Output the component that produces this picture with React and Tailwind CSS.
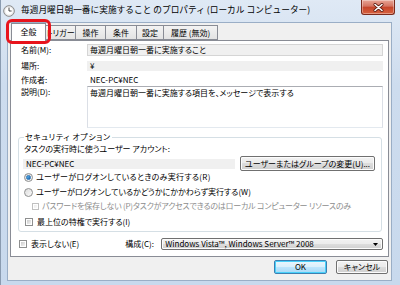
import React from "react";

const F = "font-['Noto_Sans_CJK_JP','Noto_Sans',sans-serif] [font-feature-settings:'palt']";

function Radio({ checked }) {
  return (
    <div className="w-[9px] h-[9px] rounded-full border border-[#8e8f8f] bg-gradient-to-br from-[#dcdcdc] to-[#fbfbfb] flex items-center justify-center shrink-0">
      {checked && (
        <div className="w-[5px] h-[5px] rounded-full bg-gradient-to-br from-[#5dc1f5] to-[#1d5da8] border border-[#2a72b5]" />
      )}
    </div>
  );
}

function Check({ disabled }) {
  return (
    <div
      className={
        "shrink-0 border bg-white p-[1px] " +
        (disabled ? "border-[#c0c0c0] w-[7px] h-[7px]" : "border-[#8e8f8f] w-[8px] h-[8px]")
      }
    >
      <div className={"w-full h-full bg-gradient-to-br " + (disabled ? "from-[#ececec] to-[#fafafa]" : "from-[#cbcbcb] to-[#f4f4f4]")} />
    </div>
  );
}

function Btn({ children, className = "", def }) {
  return (
    <div
      className={
        "rounded-[2px] border flex items-center justify-center text-[8px] leading-none text-black " +
        (def
          ? "border-[#3c7fb1] bg-[linear-gradient(#eaf6fd_0%,#d9f0fc_50%,#bee6fd_50%,#a7d9f5_100%)] shadow-[inset_0_0_0_1px_#48d1fa] "
          : "border-[#707070] bg-[linear-gradient(#f2f2f2_0%,#ebebeb_50%,#dddddd_50%,#cfcfcf_100%)] shadow-[inset_0_0_0_1px_#fcfcfc] ") +
        className
      }
    >
      {children}
    </div>
  );
}

export default function App() {
  return (
    <div className={"w-[400px] h-[285px] relative overflow-hidden flex flex-col bg-[linear-gradient(#dfe9f5,#cddcee_30%,#c8d9ed)] border-l border-[#8a9bb0] " + F}>
      {/* title bar */}
      <div className="h-[22px] shrink-0 flex items-start relative">
        <svg className="ml-[2px] mt-[5px]" width="12" height="12" viewBox="0 0 12 12">
          <circle cx="6" cy="6" r="5.3" fill="#f4f4f4" stroke="#7a7a7a" strokeWidth="0.9" />
          <circle cx="6" cy="6" r="4.2" fill="#fff" stroke="#c8c8c8" strokeWidth="0.5" />
          <path d="M6 2.6 V6 H8.6" stroke="#333" strokeWidth="0.9" fill="none" />
        </svg>
        <div className="ml-[6px] mt-[4px] text-[8.7px] leading-[12px] text-black whitespace-nowrap [font-feature-settings:normal]">
          毎週月曜日朝一番に実施すること のプロパティ (ローカル コンピューター)
        </div>
        <div className="absolute right-[5px] top-0 w-[34px] h-[15px] rounded-b-[3px] border border-t-0 border-[#7a2a1c] bg-[linear-gradient(#e8a596,#d47360_45%,#c5442a_50%,#d8623f)] flex items-center justify-center shadow-[inset_0_0_0_1px_rgba(255,255,255,0.35)]">
          <svg width="11" height="9" viewBox="0 0 11 9">
            <path d="M2 1.5 L9 7.5 M9 1.5 L2 7.5" stroke="#5a1a10" strokeWidth="3" strokeLinecap="round" />
            <path d="M2 1.5 L9 7.5 M9 1.5 L2 7.5" stroke="#fff" strokeWidth="1.6" strokeLinecap="round" />
          </svg>
        </div>
      </div>

      {/* client */}
      <div className="ml-[6px] mr-[8px] h-[259px] bg-[#f0f0f0] border border-[#9aaec6] flex flex-col">
        {/* tabs */}
        <div className="h-[18px] flex items-end pl-[3px] relative z-10 text-[8px] leading-none text-black">
          <div className="w-[35px] h-[18px] bg-white border border-b-0 border-[#898c95] flex items-center justify-center pb-[1px]">全般</div>
          <div className="w-[30px] h-[15px] mb-[1px] border border-[#898c95] border-l-0 bg-[linear-gradient(#f3f3f3,#e3e3e3)] flex items-center justify-center">トリガー</div>
          <div className="w-[30px] h-[15px] mb-[1px] border border-l-0 border-[#898c95] bg-[linear-gradient(#f3f3f3,#e3e3e3)] flex items-center justify-center">操作</div>
          <div className="w-[31px] h-[15px] mb-[1px] border border-l-0 border-[#898c95] bg-[linear-gradient(#f3f3f3,#e3e3e3)] flex items-center justify-center">条件</div>
          <div className="w-[27px] h-[15px] mb-[1px] border border-l-0 border-[#898c95] bg-[linear-gradient(#f3f3f3,#e3e3e3)] flex items-center justify-center">設定</div>
          <div className="w-[54px] h-[15px] mb-[1px] border border-l-0 border-[#898c95] bg-[linear-gradient(#f3f3f3,#e3e3e3)] flex items-center justify-center">履歴 (無効)</div>
        </div>
        {/* panel */}
        <div className="mx-[2px] -mt-[1px] h-[217px] bg-white border border-[#898c95] pt-[3px] pl-[10px] pr-[5px] flex flex-col text-[8px] leading-none text-black">
          <div className="h-[12px] flex items-center">
            <div className="w-[66px]">名前(M):</div>
            <div className="flex-1 h-full bg-[#f0f0f0] border border-[#d5d5d5] flex items-center pl-[2px]">毎週月曜日朝一番に実施すること</div>
          </div>
          <div className="mt-[5px] h-[10px] flex items-center">
            <div className="w-[66px]">場所:</div>
            <div className="flex-1 h-full bg-[#f0f0f0] flex items-center pl-[3px]">¥</div>
          </div>
          <div className="mt-[4px] h-[10px] flex items-center">
            <div className="w-[66px]">作成者:</div>
            <div className="flex-1 pl-[3px]">NEC-PC¥NEC</div>
          </div>
          <div className="mt-[1px] h-[42px] flex">
            <div className="w-[66px] pt-[2px]">説明(D):</div>
            <div className="flex-1 h-full bg-white border border-[#abadb3] border-l-[#dbdfe6] border-r-[#dbdfe6] border-b-[#e3e9ef] pl-[2px] pt-[2px]">
              毎週月曜日朝一番に実施する項目を、メッセージで表示する
            </div>
          </div>
          <fieldset className="mt-[4px] -ml-[3px] mr-[1px] border border-[#d5dfe5] rounded-[3px] px-[5px] pb-[4px]">
            <legend className="px-[1px] h-[10px] leading-[10px] tracking-[0.6px]">セキュリティ オプション</legend>
            <div className="mt-[2px] h-[10px] flex items-center">タスクの実行時に使うユーザー アカウント:</div>
            <div className="mt-[2px] h-[15px] flex items-center">
              <div className="-ml-[1px] w-[212px] h-[10px] bg-[#f0f0f0] flex items-center pl-[3px]">NEC-PC¥NEC</div>
              <Btn className="ml-[5px] w-[135px] h-[15px]">ユーザーまたはグループの変更(U)...</Btn>
            </div>
            <div className="mt-[1px] h-[10px] flex items-center gap-[3px]">
              <Radio checked />
              <span className="tracking-[0.3px]">ユーザーがログオンしているときのみ実行する(R)</span>
            </div>
            <div className="mt-[5px] h-[10px] flex items-center gap-[3px]">
              <Radio />
              <span>ユーザーがログオンしているかどうかにかかわらず実行する(W)</span>
            </div>
            <div className="mt-[4px] h-[10px] flex items-center gap-[3px] pl-[8px] text-[#8d8d8d]">
              <Check disabled />
              <span className="tracking-[-0.2px]">パスワードを保存しない (P)タスクがアクセスできるのはローカル コンピューター リソースのみ</span>
            </div>
            <div className="mt-[6px] h-[10px] flex items-center gap-[4px] pl-[1px]">
              <Check />
              <span>最上位の特権で実行する(I)</span>
            </div>
          </fieldset>
          <div className="mt-[6px] h-[12px] flex items-center">
            <div className="ml-[-2px] flex items-center gap-[4px]">
              <Check />
              <span>表示しない(E)</span>
            </div>
            <div className="ml-[46px] w-[36px]">構成(C):</div>
            <div className="flex-1 h-full rounded-[2px] border border-[#707070] bg-[linear-gradient(#f2f2f2_0%,#ebebeb_50%,#dddddd_50%,#cfcfcf_100%)] shadow-[inset_0_0_0_1px_#fcfcfc] flex items-center pl-[3px] pr-[4px]">
              <span className="flex-1">Windows Vista™, Windows Server™ 2008</span>
              <svg width="5" height="3" viewBox="0 0 5 3"><path d="M0 0H5L2.5 3Z" fill="#000" /></svg>
            </div>
          </div>
        </div>
        {/* buttons */}
        <div className="mt-[3px] flex justify-end pr-[3px] gap-[9px]">
          <Btn def className="w-[53px] h-[14px]">OK</Btn>
          <Btn className="w-[52px] h-[14px]">キャンセル</Btn>
        </div>
      </div>

      {/* red highlight */}
      <div className="absolute left-[5px] top-[19px] w-[45px] h-[25px] rounded-[6px] border-[3px] border-[#e8141c] z-20" />
    </div>
  );
}
